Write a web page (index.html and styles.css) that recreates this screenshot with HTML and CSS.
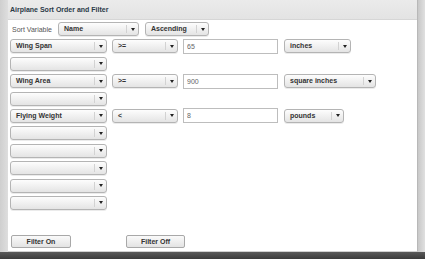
FILE: index.html
```html
<!DOCTYPE html>
<html lang="en">
<head>
    <meta charset="UTF-8">
    <title>Airplane Sort Order and Filter</title>
    <link rel="stylesheet" href="styles.css">
</head>
<body>
    <div class="desktop">
        <div class="frame">
            <div class="strip-left"></div>
            <div class="window">
                <div class="title">Airplane Sort Order and Filter</div>
                <div class="content">
                    <div class="rows">
                        <div class="row sort-row">
                            <span class="label">Sort Variable</span>
                            <div class="select w-name"><span class="val">Name</span><span class="arrow"></span></div>
                            <div class="select w-order"><span class="val">Ascending</span><span class="arrow"></span></div>
                        </div>
                        <div class="row">
                            <div class="select w-var"><span class="val">Wing Span</span><span class="arrow"></span></div>
                            <div class="select w-op"><span class="val">&gt;=</span><span class="arrow"></span></div>
                            <input class="field" type="text" value="65">
                            <div class="select w-inches"><span class="val">inches</span><span class="arrow"></span></div>
                        </div>
                        <div class="row">
                            <div class="select w-var"><span class="val"></span><span class="arrow"></span></div>
                        </div>
                        <div class="row">
                            <div class="select w-var"><span class="val">Wing Area</span><span class="arrow"></span></div>
                            <div class="select w-op"><span class="val">&gt;=</span><span class="arrow"></span></div>
                            <input class="field" type="text" value="900">
                            <div class="select w-sq"><span class="val">square inches</span><span class="arrow"></span></div>
                        </div>
                        <div class="row">
                            <div class="select w-var"><span class="val"></span><span class="arrow"></span></div>
                        </div>
                        <div class="row">
                            <div class="select w-var"><span class="val">Flying Weight</span><span class="arrow"></span></div>
                            <div class="select w-op"><span class="val">&lt;</span><span class="arrow"></span></div>
                            <input class="field" type="text" value="8">
                            <div class="select w-pounds"><span class="val">pounds</span><span class="arrow"></span></div>
                        </div>
                        <div class="row">
                            <div class="select w-var"><span class="val"></span><span class="arrow"></span></div>
                        </div>
                        <div class="row">
                            <div class="select w-var"><span class="val"></span><span class="arrow"></span></div>
                        </div>
                        <div class="row">
                            <div class="select w-var"><span class="val"></span><span class="arrow"></span></div>
                        </div>
                        <div class="row">
                            <div class="select w-var"><span class="val"></span><span class="arrow"></span></div>
                        </div>
                        <div class="row">
                            <div class="select w-var"><span class="val"></span><span class="arrow"></span></div>
                        </div>
                    </div>
                    <div class="buttons">
                        <button class="btn btn-on">Filter On</button>
                        <button class="btn btn-off">Filter Off</button>
                    </div>
                </div>
            </div>
            <div class="strip-right"></div>
        </div>
        <div class="taskbar"></div>
    </div>
</body>
</html>
```

FILE: styles.css
```css
html, body {
    margin: 0;
    padding: 0;
    overflow: hidden;
}
body {
    font-family: "Liberation Sans", Arial, sans-serif;
    background: #d4d4d4;
}
.desktop {
    width: 425px;
    height: 259px;
    display: flex;
    flex-direction: column;
}
.frame {
    display: flex;
    height: 252px;
}
.strip-left {
    width: 8px;
    background: linear-gradient(90deg, #cfcfcf, #dedede);
}
.strip-right {
    width: 7px;
    background: linear-gradient(90deg, #c8c8c8, #e0e0e0);
}
.window {
    width: 410px;
    display: flex;
    flex-direction: column;
    background: #fff;
    border-right: 1px solid #b8b8b8;
    border-bottom: 1px solid #d0d0d0;
    box-sizing: border-box;
}
.taskbar {
    flex: 1;
    background: linear-gradient(#5a5a5a, #3a3a3a);
}
.title {
    height: 20px;
    line-height: 20px;
    padding-left: 2px;
    background: linear-gradient(#ebebeb, #e3e3e3);
    border-bottom: 1px solid #d6d6d6;
    box-sizing: border-box;
    font-size: 7px;
    font-weight: bold;
    color: #2b3a48;
}
.content {
    flex: 1;
    padding: 2px 0 0 2px;
    display: flex;
    flex-direction: column;
}
.rows {
    display: flex;
    flex-direction: column;
    gap: 3.4px;
}
.row {
    display: flex;
    align-items: center;
    height: 14px;
}
.label {
    font-size: 7px;
    color: #555;
    margin-left: 2px;
    width: 46px;
}
.select {
    height: 14px;
    display: flex;
    align-items: stretch;
    box-sizing: border-box;
    border: 1px solid #b4b4b4;
    border-radius: 3px;
    background: linear-gradient(#fdfdfd, #e4e4e4);
    box-shadow: 0 1px 0 rgba(0,0,0,0.08);
}
.select .val {
    flex: 1;
    font-size: 7px;
    font-weight: bold;
    color: #333;
    line-height: 12px;
    padding-left: 5px;
    white-space: nowrap;
    overflow: hidden;
}
.select .arrow {
    width: 11px;
    border-left: 1px solid #d2d2d2;
    margin: 2px 0;
    display: flex;
    align-items: center;
    justify-content: center;
}
.select .arrow::after {
    content: "";
    border-left: 2px solid transparent;
    border-right: 2px solid transparent;
    border-top: 3px solid #222;
}
.w-name { width: 81px; }
.w-order { width: 64px; margin-left: 6px; }
.w-var { width: 97px; }
.w-op { width: 66px; margin-left: 5px; }
.w-inches { width: 67px; }
.w-sq { width: 92px; }
.w-pounds { width: 60px; }
.field {
    width: 95px;
    height: 15px;
    margin: 0 6px 0 5px;
    box-sizing: border-box;
    border: 1px solid #bdbdbd;
    border-radius: 0;
    padding: 0 0 0 3px;
    font-family: "Liberation Sans", Arial, sans-serif;
    font-size: 7px;
    color: #666;
    background: #fff;
    outline: none;
}
.buttons {
    display: flex;
    margin-top: 25px;
    padding-left: 1px;
}
.btn {
    height: 13px;
    padding: 0;
    box-sizing: border-box;
    border: 1px solid #a8a8a8;
    border-radius: 2px;
    background: linear-gradient(#fafafa, #e3e3e3);
    font-family: "Liberation Sans", Arial, sans-serif;
    font-size: 7px;
    font-weight: bold;
    color: #333;
}
.btn-on { width: 60px; }
.btn-off { width: 59px; margin-left: 55px; }
```
